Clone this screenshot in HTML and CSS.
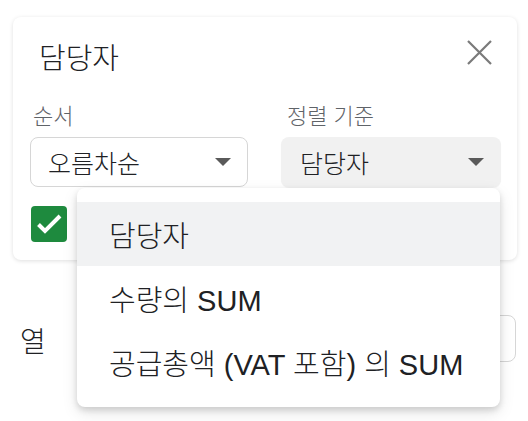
FILE: index.html
```html
<!DOCTYPE html>
<html lang="ko">
<head>
<meta charset="utf-8">
<link rel="stylesheet" href="styles.css">
</head>
<body>
<div class="page">
  <div class="card">
    <div class="header">
      <div class="title">담당자</div>
      <button class="close" aria-label="닫기">
        <svg width="25" height="25" viewBox="0 0 25 25"><path d="M1 1L24 24M24 1L1 24" stroke="#7a7a7a" stroke-width="2.2" fill="none"/></svg>
      </button>
    </div>
    <div class="fields">
      <div class="field">
        <div class="label">순서</div>
        <div class="select outlined"><span>오름차순</span><i class="arrow"></i></div>
      </div>
      <div class="field">
        <div class="label">정렬 기준</div>
        <div class="select filled"><span>담당자</span><i class="arrow"></i></div>
      </div>
    </div>
    <div class="check-row">
      <div class="checkbox">
        <svg width="36" height="36" viewBox="0 0 36 36"><path d="M7.5 18.5L14 25L29 10" stroke="#fff" stroke-width="4" fill="none"/></svg>
      </div>
    </div>
  </div>
  <div class="col-row">
    <div class="col-label">열</div>
    <div class="col-input"></div>
  </div>
  <div class="menu">
    <div class="item active">담당자</div>
    <div class="item">수량의 SUM</div>
    <div class="item">공급총액 (VAT 포함) 의 SUM</div>
  </div>
</div>
</body>
</html>
```
FILE: styles.css
```css
* { box-sizing: border-box; }
html, body { margin: 0; padding: 0; background: #fff; }
body {
  font-family: "Liberation Sans", "Noto Sans CJK KR", sans-serif;
  font-weight: 300;
  color: #202124;
  width: 528px;
  height: 421px;
  overflow: hidden;
}
.page { position: relative; padding-top: 17px; height: 421px; }
.card {
  margin-left: 13px;
  width: 504px;
  background: #fff;
  border-radius: 8px;
  box-shadow: 0 1px 4px rgba(0,0,0,0.13);
  padding: 23px 16px 18px 17px;
}
.header { display: flex; justify-content: space-between; align-items: flex-start; }
.title { font-size: 29px; line-height: 38px; margin-left: 9px; color: #202124; }
.close { border: 0; background: none; padding: 0; margin: 0 9px 0 0; width: 25px; height: 25px; display: block; }
.close svg { display: block; }
.fields { display: grid; grid-template-columns: 218px 220px; column-gap: 33px; margin-top: 25px; }
.label { font-size: 22px; line-height: 28px; color: #5f6368; margin-left: 3px; margin-bottom: 6px; }
.field:nth-child(2) .label { margin-left: 6px; }
.select {
  height: 50px;
  border-radius: 8px;
  display: flex;
  align-items: center;
  justify-content: space-between;
  font-size: 25px;
  color: #202124;
  padding-right: 17px;
}
.outlined { border: 1px solid #d6d6d6; padding-left: 17px; padding-right: 16px; }
.filled { background: #f1f1f1; padding-left: 19px; box-shadow: 0 1px 1px rgba(0,0,0,0.06); }
.arrow {
  width: 0; height: 0;
  border-left: 8px solid transparent;
  border-right: 8px solid transparent;
  border-top: 8px solid #5a5a5a;
}
.check-row { margin-top: 19px; }
.checkbox {
  width: 36px; height: 36px;
  margin-left: 1px;
  background: #1e8a3e;
  border-radius: 4px;
}
.checkbox svg { display: block; }
.col-row {
  display: flex;
  justify-content: space-between;
  align-items: center;
  margin-top: 55px;
  padding-left: 20px;
  padding-right: 12px;
}
.col-label { font-size: 28px; line-height: 36px; color: #202124; margin-top: 8px; }
.col-input { width: 300px; height: 47px; border: 1px solid #d6d6d6; border-radius: 8px; }
.menu {
  position: absolute;
  left: 77px;
  top: 188px;
  width: 423px;
  background: #fff;
  border-radius: 8px;
  padding: 14px 0 13px;
  box-shadow: 0 3px 6px rgba(0,0,0,0.14), 0 6px 16px rgba(0,0,0,0.10);
}
.item {
  height: 64px;
  display: flex;
  align-items: center;
  padding-left: 32px;
  font-size: 29px;
  color: #202124;
}
.item.active { background: #f1f2f3; }
```
